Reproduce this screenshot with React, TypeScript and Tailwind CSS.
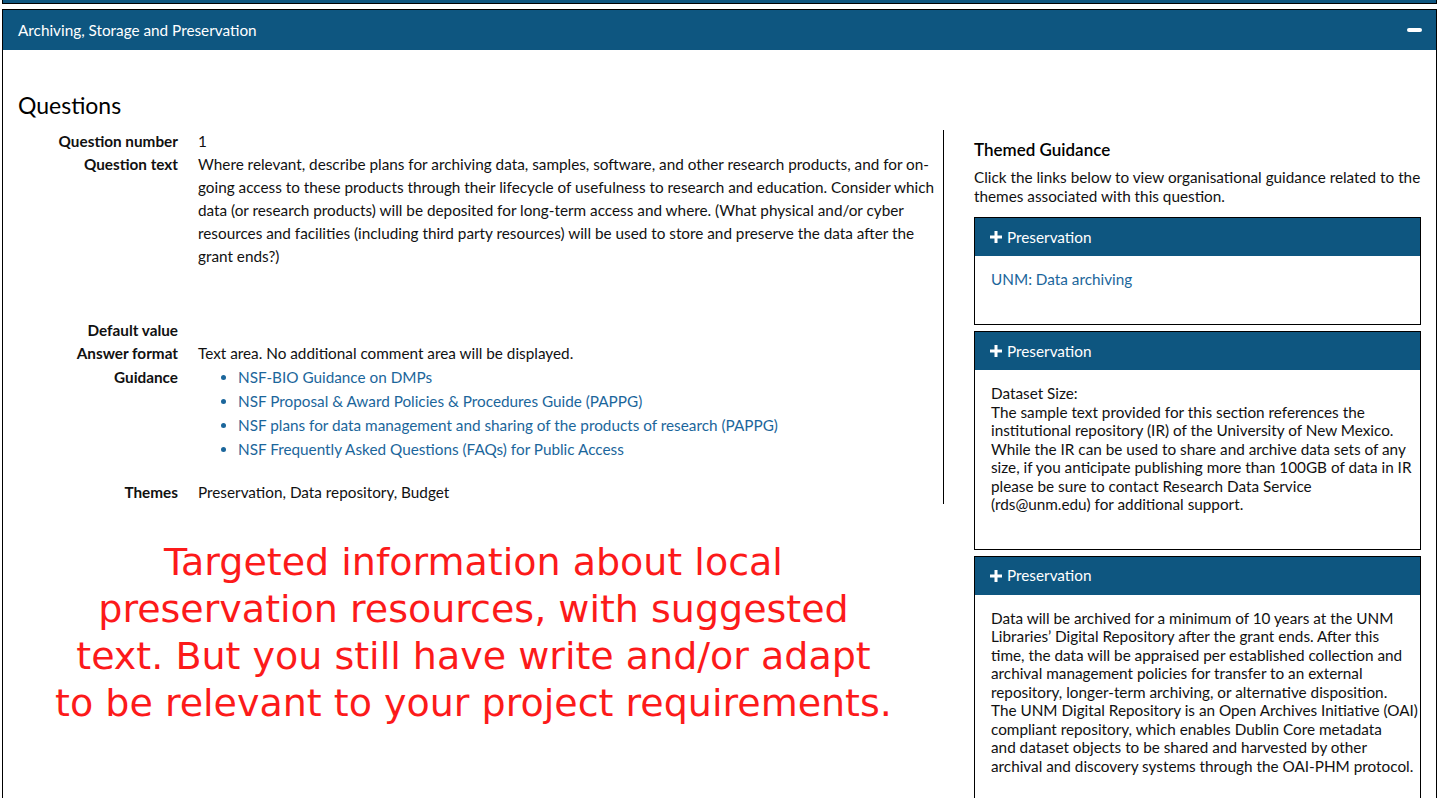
const questionLines = [
  "Where relevant, describe plans for archiving data, samples, software, and other research products, and for on-",
  "going access to these products through their lifecycle of usefulness to research and education. Consider which",
  "data (or research products) will be deposited for long-term access and where. (What physical and/or cyber",
  "resources and facilities (including third party resources) will be used to store and preserve the data after the",
  "grant ends?)",
];

const guidanceLinks = [
  "NSF-BIO Guidance on DMPs",
  "NSF Proposal & Award Policies & Procedures Guide (PAPPG)",
  "NSF plans for data management and sharing of the products of research (PAPPG)",
  "NSF Frequently Asked Questions (FAQs) for Public Access",
];

const datasetLines = [
  "Dataset Size:",
  "The sample text provided for this section references the",
  "institutional repository (IR) of the University of New Mexico.",
  "While the IR can be used to share and archive data sets of any",
  "size, if you anticipate publishing more than 100GB of data in IR",
  "please be sure to contact Research Data Service",
  "(rds@unm.edu) for additional support.",
];

const archiveLines = [
  "Data will be archived for a minimum of 10 years at the UNM",
  "Libraries’ Digital Repository after the grant ends. After this",
  "time, the data will be appraised per established collection and",
  "archival management policies for transfer to an external",
  "repository, longer-term archiving, or alternative disposition.",
  "The UNM Digital Repository is an Open Archives Initiative (OAI)",
  "compliant repository, which enables Dublin Core metadata",
  "and dataset objects to be shared and harvested by other",
  "archival and discovery systems through the OAI-PHM protocol.",
];

const noteLines = [
  "Targeted information about local",
  "preservation resources, with suggested",
  "text. But you still have write and/or adapt",
  "to be relevant to your project requirements.",
];

function PlusIcon() {
  return (
    <svg width="12" height="12" viewBox="0 0 12 12" className="shrink-0">
      <rect x="4.5" y="0" width="3" height="12" fill="white" />
      <rect x="0" y="4.5" width="12" height="3" fill="white" />
    </svg>
  );
}

function GuidanceBox({ children }: { children: React.ReactNode }) {
  return (
    <div className="border border-black mb-[6px]">
      <div className="h-[38px] bg-[#0e5680] text-white flex items-center gap-[5px] pl-[15px]">
        <PlusIcon />
        <span>Preservation</span>
      </div>
      <div className="pl-[16px] pr-[14px] pt-[14px] pb-[35px] leading-[18.5px]">{children}</div>
    </div>
  );
}

export default function App() {
  return (
    <div className="font-['Lato',sans-serif] text-[15.3px] text-[#111] bg-white px-[2px] min-h-screen">
      {/* previous panel edge */}
      <div className="h-[4px] bg-[#0e5680] border-x border-b border-black" />

      <div className="mt-[5px] border border-black">
        <div className="h-[40px] bg-[#0e5680] text-white flex items-center justify-between pl-[15px] pr-[14px]">
          <span>Archiving, Storage and Preservation</span>
          <span className="w-[15px] h-[4px] rounded-sm bg-white" />
        </div>

        <div className="px-[15px] pt-[41px]">
          <h2 className="text-[23px] leading-[28px] text-black mb-[11px]">Questions</h2>

          <div className="flex gap-[30px]">
            {/* left column */}
            <div className="w-[926px] shrink-0">
              <div className="border-r border-black">
                <div className="grid grid-cols-[160px_1fr] gap-x-[20px] leading-[23px]">
                  <div className="font-bold text-right">Question number</div>
                  <div>1</div>

                  <div className="font-bold text-right">Question text</div>
                  <div>
                    {questionLines.map((l) => (
                      <div key={l} className="whitespace-nowrap">{l}</div>
                    ))}
                  </div>

                  <div className="font-bold text-right mt-[51px]">Default value</div>
                  <div className="mt-[51px]" />

                  <div className="font-bold text-right">Answer format</div>
                  <div>Text area. No additional comment area will be displayed.</div>

                  <div className="font-bold text-right leading-[24px]">Guidance</div>
                  <ul className="list-disc pl-[40px] leading-[24px]">
                    {guidanceLinks.map((g) => (
                      <li key={g} className="text-[#1b669b]">
                        <a href="#" className="text-[#1b669b]">{g}</a>
                      </li>
                    ))}
                  </ul>

                  <div className="font-bold text-right mt-[20px]">Themes</div>
                  <div className="mt-[20px]">Preservation, Data repository, Budget</div>
                </div>
              </div>

              <div className="pr-[15px] mt-[35px] text-center font-['DejaVu_Sans',sans-serif] text-[38px] leading-[47px] text-[#fc1a1a]">
                {noteLines.map((l) => (
                  <div key={l} className="whitespace-nowrap">{l}</div>
                ))}
              </div>
            </div>

            {/* right column */}
            <div className="w-[447px] shrink-0">
              <h3 className="text-[17px] font-semibold leading-[22px] mt-[9px] mb-[7px] text-black">Themed Guidance</h3>
              <p className="leading-[19px] mb-[11px]">
                Click the links below to view organisational guidance related to the
                <br />
                themes associated with this question.
              </p>

              <GuidanceBox>
                <a href="#" className="text-[#1b669b] leading-[19px]">UNM: Data archiving</a>
              </GuidanceBox>

              <GuidanceBox>
                {datasetLines.map((l) => (
                  <div key={l} className="whitespace-nowrap">{l}</div>
                ))}
              </GuidanceBox>

              <GuidanceBox>
                {archiveLines.map((l) => (
                  <div key={l} className="whitespace-nowrap">{l}</div>
                ))}
              </GuidanceBox>
            </div>
          </div>
        </div>
      </div>
    </div>
  );
}
